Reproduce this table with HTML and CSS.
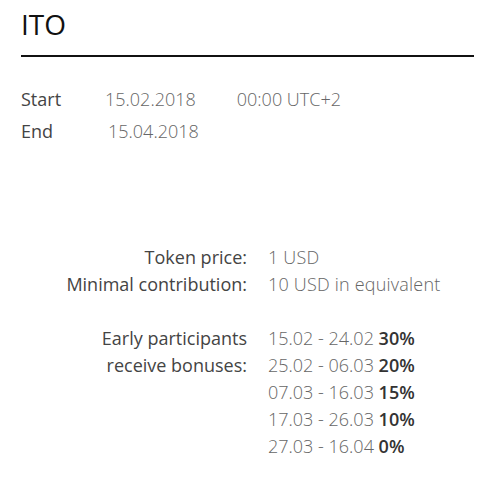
FILE: index.html
```html
<!DOCTYPE html>
<html>
<head>
<meta charset="utf-8">
<link rel="stylesheet" href="styles.css">
</head>
<body>
<div class="page">
  <h1 class="title">ITO</h1>
  <div class="dates">
    <div class="date-row">
      <span class="date-label start-label">Start</span>
      <span class="date-value">15.02.2018</span>
      <span class="date-time">00:00 UTC+2</span>
    </div>
    <div class="date-row">
      <span class="date-label end-label">End</span>
      <span class="date-value">15.04.2018</span>
    </div>
  </div>
  <div class="info">
    <div class="info-label">Token price:</div>
    <div class="info-value">1 USD</div>
    <div class="info-label">Minimal contribution:</div>
    <div class="info-value">10 USD in equivalent</div>
  </div>
  <div class="bonus">
    <div class="bonus-label">Early participants<br>receive bonuses:</div>
    <div class="bonus-list">
      <div>15.02 - 24.02 <b>30%</b></div>
      <div>25.02 - 06.03 <b>20%</b></div>
      <div>07.03 - 16.03 <b>15%</b></div>
      <div>17.03 - 26.03 <b>10%</b></div>
      <div>27.03 - 16.04 <b>0%</b></div>
    </div>
  </div>
</div>
</body>
</html>
```
FILE: styles.css
```css
html, body {
  margin: 0;
  padding: 0;
  background: #fff;
}
body {
  font-family: "Open Sans", "Liberation Sans", sans-serif;
  color: #333;
}
.page {
  padding: 0 16px 0 21px;
}
.title {
  margin: 0;
  padding-top: 6px;
  font-size: 28px;
  font-weight: 500;
  line-height: 36px;
  color: #111;
  padding-bottom: 13px;
  border-bottom: 2px solid #111;
}
.dates {
  margin-top: 26px;
}
.date-row {
  display: flex;
  font-size: 18px;
  line-height: 32px;
}
.date-label {
  color: #444;
  font-weight: 400;
}
.start-label {
  width: 84px;
}
.end-label {
  width: 87px;
}
.date-value {
  color: #666;
  font-weight: 300;
}
.date-time {
  color: #666;
  font-weight: 300;
  margin-left: 41px;
}
.info {
  margin-top: 97px;
  display: grid;
  grid-template-columns: 226px auto;
  column-gap: 21px;
  font-size: 18px;
  line-height: 27px;
}
.info-label, .bonus-label {
  text-align: right;
  color: #444;
  font-weight: 400;
}
.info-value {
  color: #666;
  font-weight: 300;
  letter-spacing: 0.2px;
}
.bonus-list {
  color: #666;
  font-weight: 300;
}
.bonus {
  margin-top: 27px;
  display: grid;
  grid-template-columns: 226px auto;
  column-gap: 21px;
  font-size: 18px;
  line-height: 27px;
}
.bonus-list b {
  font-weight: 600;
  color: #333;
}
```
